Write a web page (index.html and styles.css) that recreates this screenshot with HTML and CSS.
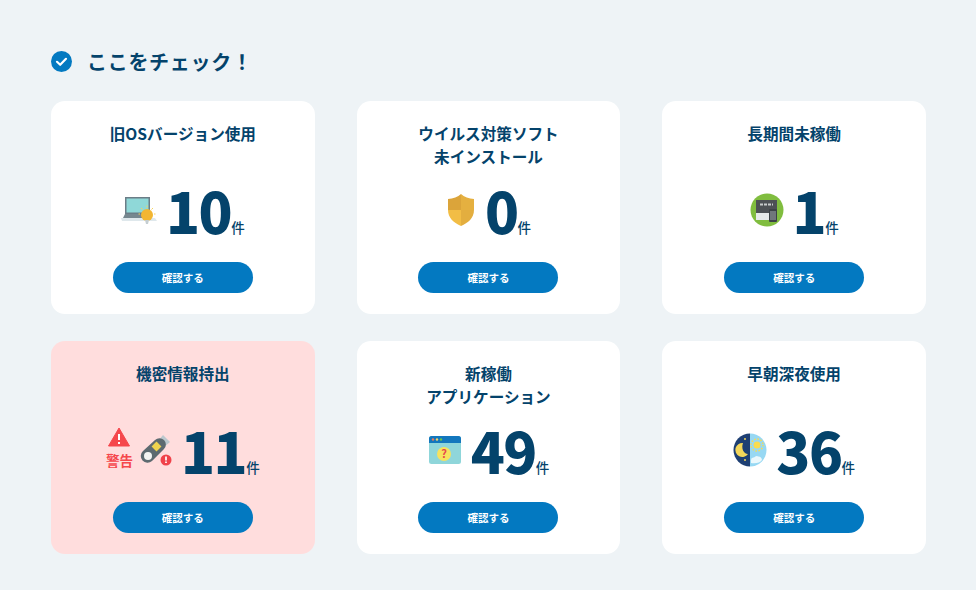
FILE: index.html
```html
<!DOCTYPE html>
<html lang="ja">
<head>
    <meta charset="UTF-8">
    <title>ここをチェック！</title>
    <link rel="stylesheet" href="styles.css">
</head>
<body>
    <h2 class="section-title">
        <svg class="check-icon" viewBox="0 0 21 21" width="21" height="21">
            <circle cx="10.5" cy="10.5" r="10.5" fill="#0379c1"/>
            <path d="M6 10.8l3.2 3 5.8-6" fill="none" stroke="#fff" stroke-width="2.2" stroke-linecap="round" stroke-linejoin="round"/>
        </svg>
        ここをチェック！
    </h2>

    <div class="card-grid">
        <div class="card">
            <h3 class="card-title">旧OSバージョン使用</h3>
            <div class="count-row">
                <svg class="count-icon" viewBox="0 0 36 32" width="36" height="32">
                    <path d="M0 24h34l2 3H1z" fill="#dfe8ec"/>
                    <rect x="4" y="3" width="25" height="17" fill="#6b7d87"/>
                    <rect x="5.500" y="4.500" width="22" height="14" fill="#8fd8d8"/>
                    <path d="M4 20h25l2 4H2z" fill="#76878f"/>
                    <circle cx="26" cy="21" r="6" fill="#f2b632"/>
                    <path d="M24 26h4l-1 4h-2z" fill="#c5ced2"/>
                    <path d="M26 11.500v2M20 14l1.500 1.500M32 14l-1.500 1.500M17.500 20h1.500M33 20h1.500" stroke="#f6d35c" stroke-width="1"/>
                </svg>
                <span class="count">10</span><span class="unit">件</span>
            </div>
            <a class="check-btn" href="#">確認する</a>
        </div>

        <div class="card">
            <h3 class="card-title">ウイルス対策ソフト<br>未インストール</h3>
            <div class="count-row">
                <svg class="count-icon" viewBox="0 0 30 34" width="30" height="34">
                    <path d="M15 1c3 3 8 4.500 13 5v11H15z" fill="#e5b040"/>
                    <path d="M15 1v16H2V6c5-.5 10-2 13-5z" fill="#dba43a"/>
                    <path d="M2 17h13v16C8 30 2 25 2 17z" fill="#f2bd45"/>
                    <path d="M15 17h13c0 8-6 13-13 16z" fill="#e3ae3f"/>
                </svg>
                <span class="count">0</span><span class="unit">件</span>
            </div>
            <a class="check-btn" href="#">確認する</a>
        </div>

        <div class="card">
            <h3 class="card-title">長期間未稼働</h3>
            <div class="count-row">
                <svg class="count-icon" viewBox="0 0 34 34" width="34" height="34">
                    <circle cx="17" cy="17" r="16.500" fill="#80bd3f"/>
                    <rect x="6" y="7" width="21" height="13" fill="#4d5155"/>
                    <path d="M10 11.500h13" stroke="#c8cbcc" stroke-width="2" stroke-dasharray="3 1"/>
                    <rect x="6" y="20" width="21" height="7" fill="#e6e9ea"/>
                    <rect x="19" y="16" width="8" height="13" rx="1" fill="#3d4347"/>
                    <rect x="20" y="18" width="6" height="9" fill="#70777b"/>
                </svg>
                <span class="count">1</span><span class="unit">件</span>
            </div>
            <a class="check-btn" href="#">確認する</a>
        </div>

        <div class="card card-alert">
            <h3 class="card-title">機密情報持出</h3>
            <div class="count-row">
                <div class="warning">
                    <svg viewBox="0 0 22 20" width="22" height="20">
                        <path d="M11 1l10.500 18H.5z" fill="#f5474c" stroke="#f5474c" stroke-linejoin="round"/>
                        <path d="M11 7v6M11 15v2" stroke="#fff" stroke-width="2"/>
                    </svg>
                    <span class="warning-text">警告</span>
                </div>
                <svg class="count-icon usb-icon" viewBox="0 0 32 32" width="32" height="32">
                    <path d="M18 7l5-6 7 7-6 5z" fill="#bcc8ce"/>
                    <path d="M3 17L15 6a6 6 0 0 1 9 9L12 27a6 6 0 0 1-9-10z" fill="#5d6a70"/>
                    <rect x="13" y="9" width="7" height="7" transform="rotate(45 16.500 12.500)" fill="#eed24e"/>
                    <circle cx="8" cy="22" r="4" fill="#f3f4f2"/>
                    <circle cx="26" cy="26" r="5.500" fill="#f0424a"/>
                    <path d="M26 22.500v4M26 27.500v1.500" stroke="#fff" stroke-width="1.700"/>
                </svg>
                <span class="count">11</span><span class="unit">件</span>
            </div>
            <a class="check-btn" href="#">確認する</a>
        </div>

        <div class="card">
            <h3 class="card-title">新稼働<br>アプリケーション</h3>
            <div class="count-row">
                <svg class="count-icon" viewBox="0 0 34 30" width="34" height="30">
                    <rect x="1" y="1" width="32" height="28" rx="2.500" fill="#8fd6da"/>
                    <path d="M1 8V3.500A2.500 2.500 0 0 1 3.500 1h27A2.500 2.500 0 0 1 33 3.500V8z" fill="#1377bd"/>
                    <circle cx="5" cy="4.500" r="1.200" fill="#e8785a"/>
                    <circle cx="9" cy="4.500" r="1.200" fill="#f1d36b"/>
                    <circle cx="13" cy="4.500" r="1.200" fill="#6cc24a"/>
                    <circle cx="16" cy="19" r="7" fill="#f7e25e"/>
                    <text class="icon-mark" x="16" y="22.500" text-anchor="middle">?</text>
                </svg>
                <span class="count">49</span><span class="unit">件</span>
            </div>
            <a class="check-btn" href="#">確認する</a>
        </div>

        <div class="card">
            <h3 class="card-title">早朝深夜使用</h3>
            <div class="count-row">
                <svg class="count-icon" viewBox="0 0 34 34" width="34" height="34">
                    <path d="M17 .5a16.500 16.500 0 0 0 0 33z" fill="#1e3f73"/>
                    <path d="M17 .5a16.500 16.500 0 0 1 0 33z" fill="#97d8f3"/>
                    <path d="M10 10a7 7 0 1 0 5 11c-4.500 0-7-6-5-11z" fill="#f3d65a"/>
                    <circle cx="12" cy="6" r="1" fill="#f3d65a"/>
                    <circle cx="12" cy="27" r="1" fill="#f3d65a"/>
                    <circle cx="24" cy="12" r="3.500" fill="#f9dc4f"/>
                    <circle cx="24" cy="12" r="6" fill="none" stroke="#f9dc4f" stroke-width="1.500" stroke-dasharray="1.500 1.600"/>
                    <path d="M18 27q0-3 3-2.500 2-2.500 4.500-1 3 0 3.500 3.500-3 4-11 3z" fill="#eaf8fc"/>
                </svg>
                <span class="count">36</span><span class="unit">件</span>
            </div>
            <a class="check-btn" href="#">確認する</a>
        </div>
    </div>
</body>
</html>
```

FILE: styles.css
```css
body {
    margin: 0;
    padding: 46px 50px 36px 51px;
    background-color: #eef3f6;
    color: #04436b;
    font-family: "Noto Sans CJK JP", "Noto Sans", sans-serif;
}
.section-title {
    display: flex;
    align-items: center;
    gap: 15px;
    margin: 0 0 25px;
    height: 30px;
    font-size: 20px;
    font-weight: 700;
    letter-spacing: 0.7px;
}
.card-grid {
    display: grid;
    grid-template-columns: repeat(3, 1fr);
    grid-auto-rows: 212.5px;
    column-gap: 42px;
    row-gap: 27.5px;
}
.card {
    display: flex;
    flex-direction: column;
    align-items: center;
    padding: 21px 0 20.5px;
    background: #fff;
    border-radius: 14px;
}
.card-alert {
    background: #ffdddd;
}
.card-title {
    margin: 0;
    min-height: 46px;
    font-size: 15.6px;
    font-weight: 700;
    line-height: 23px;
    text-align: center;
}
.count-row {
    flex: 1;
    display: flex;
    align-items: center;
    justify-content: center;
    padding-bottom: 11px;
}
.count-icon {
    margin-right: 9px;
}
.usb-icon {
    margin-left: 7px;
}
.count {
    font-size: 56px;
    font-weight: 900;
    line-height: 60px;
    letter-spacing: -1.5px;
}
.unit {
    align-self: center;
    margin-top: 34px;
    font-size: 13.5px;
    font-weight: 500;
}
.warning {
    display: flex;
    flex-direction: column;
    align-items: center;
}
.warning-text {
    color: #f5474c;
    font-size: 13.5px;
    font-weight: 700;
    line-height: 26px;
}
.icon-mark {
    fill: #e8474c;
    font-size: 11px;
    font-weight: 700;
}
.check-btn {
    display: block;
    width: 140px;
    height: 31px;
    border-radius: 16px;
    background: #0379c1;
    color: #fff;
    font-size: 10.5px;
    font-weight: 700;
    line-height: 31px;
    text-align: center;
    text-decoration: none;
}
```
